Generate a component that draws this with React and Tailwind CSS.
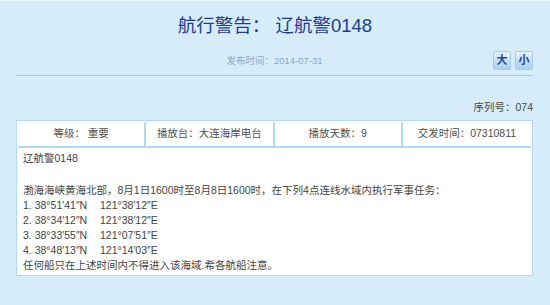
import React from "react";

const font = { fontFamily: '"Liberation Sans", "Noto Sans CJK SC", sans-serif' };

const cells = ["等级： 重要", "播放台：大连海岸电台", "播放天数：9", "交发时间：07310811"];

const coords = [
  ["1. 38°51′41″N", "121°38′12″E"],
  ["2. 38°34′12″N", "121°38′12″E"],
  ["3. 38°33′55″N", "121°07′51″E"],
  ["4. 38°48′13″N", "121°14′03″E"],
];

const App = () => {
  return (
    <div
      className="w-[550px] h-[305px] bg-[#d6ecf9] border-t border-[#eef8fe] overflow-hidden"
      style={font}
    >
      {/* TITLE */}
      <h1 className="pt-[13px] text-center text-[18.5px] leading-[24px] text-[#1d3c93]">
        航行警告： 辽航警0148
      </h1>

      <div className="ml-[16px] w-[517px]">
        {/* DATE + SIZE BUTTONS */}
        <div className="mt-[13px] grid grid-cols-[1fr_auto_1fr] items-center">
          <div />
          <p className="text-[9.5px] leading-[19px] text-[#8aa7c8]">发布时间：2014-07-31</p>
          <div className="flex justify-end gap-[4px]">
            {["大", "小"].map((t) => (
              <span
                key={t}
                className="w-[18px] h-[19px] flex items-center justify-center text-[11px] font-bold text-[#1d4a9c] rounded-[2px] border border-[#a8cbea] bg-gradient-to-b from-[#e8f3fc] to-[#a9cff0]"
              >
                {t}
              </span>
            ))}
          </div>
        </div>

        <div className="mt-[5px] border-b border-[#a7cbe8]" />

        {/* SERIAL */}
        <p className="mt-[24px] text-right text-[10.5px] leading-[14px] text-[#4a4a4a]">
          序列号：074
        </p>

        {/* TABLE */}
        <div className="mt-[6px] bg-white border border-[#b4d8f2] p-px">
          <div className="grid grid-cols-4 h-[26px] border-b-2 border-[#b4d8f2]">
            {cells.map((c, i) => (
              <div
                key={c}
                className={`flex items-center justify-center text-[10.5px] text-[#505050] ${
                  i < 3 ? "border-r-2 border-[#b4d8f2]" : ""
                }`}
              >
                {c}
              </div>
            ))}
          </div>

          <div className="h-[126px] px-[5px] pt-[3px] text-[10.5px] leading-[15px] text-[#444]">
            <p>辽航警0148</p>
            <p className="mt-[17px]">
              渤海海峡黄海北部，8月1日1600时至8月8日1600时，在下列4点连线水域内执行军事任务：
            </p>
            {coords.map(([a, b]) => (
              <p key={a} className="flex">
                <span className="w-[77px]">{a}</span>
                <span>{b}</span>
              </p>
            ))}
            <p>任何船只在上述时间内不得进入该海域.希各航船注意。</p>
          </div>
        </div>
      </div>
    </div>
  );
};

export default App;
